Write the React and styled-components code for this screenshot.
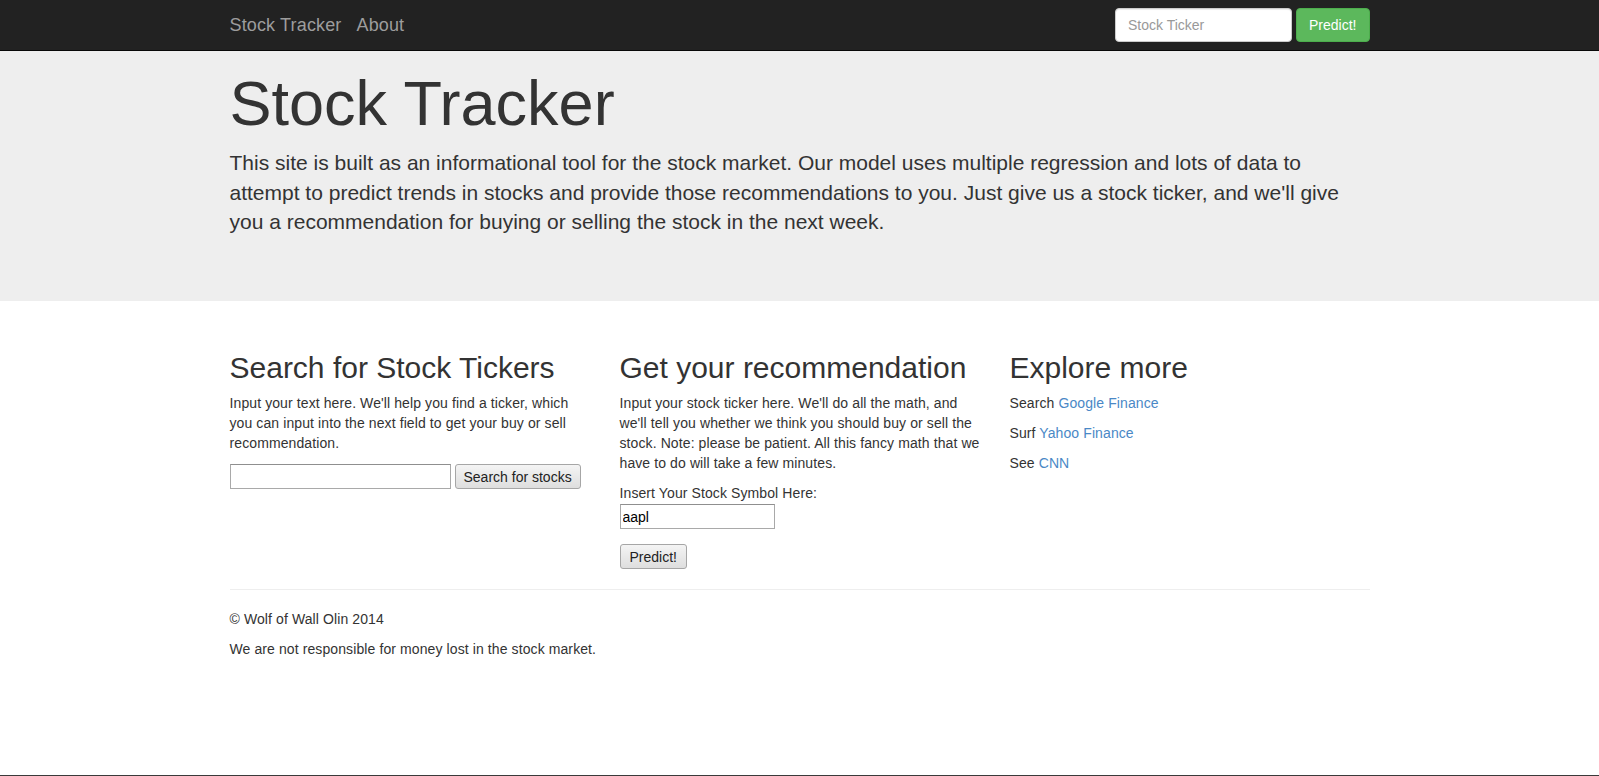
import React from 'react';
import styled, { createGlobalStyle } from 'styled-components';

const GlobalStyle = createGlobalStyle`
	* {
		box-sizing: border-box;
	}
	body {
		margin: 0;
		font-family: "Liberation Sans", Arial, sans-serif;
		font-size: 14px;
		line-height: 1.428571;
		letter-spacing: 0.1px;
		color: #333;
		background: #fff;
	}
`;

const Page = styled.div`
	min-height: 100vh;
	display: flex;
	flex-direction: column;
`;

const Container = styled.div`
	width: 1170px;
	margin: 0 auto;
	padding: 0 15px;
`;

const Navbar = styled.nav`
	background: #222;
	border-bottom: 1px solid #080808;
`;

const NavInner = styled(Container)`
	height: 50px;
	display: flex;
	align-items: center;
	justify-content: space-between;
`;

const NavLinks = styled.div`
	display: flex;
	gap: 15px;
`;

const NavLink = styled.a`
	font-size: 18px;
	line-height: 20px;
	letter-spacing: 0.15px;
	color: #9d9d9d;
	text-decoration: none;
`;

const NavForm = styled.form`
	display: flex;
	gap: 4px;
`;

const NavInput = styled.input`
	width: 177px;
	height: 34px;
	padding: 6px 12px;
	font: 14px "Liberation Sans", Arial, sans-serif;
	color: #555;
	background: #fff;
	border: 1px solid #ccc;
	border-radius: 4px;
	box-shadow: inset 0 1px 1px rgba(0, 0, 0, 0.075);
	&::placeholder {
		color: #999;
	}
`;

const SuccessButton = styled.button`
	height: 34px;
	padding: 6px 12px;
	font: 14px "Liberation Sans", Arial, sans-serif;
	color: #fff;
	background: #5cb85c;
	border: 1px solid #4cae4c;
	border-radius: 4px;
`;

const Jumbotron = styled.header`
	background: #eee;
	padding: 18px 0 50px;
	margin-bottom: 30px;
`;

const Title = styled.h1`
	margin: 0 0 10px;
	font-size: 63px;
	font-weight: 500;
	line-height: 1.1;
	letter-spacing: 0;
`;

const Lead = styled.p`
	margin: 0 0 15px;
	font-size: 21px;
	line-height: 1.4;
	letter-spacing: 0;
`;

const Row = styled.div`
	display: grid;
	grid-template-columns: repeat(3, 1fr);
	column-gap: 30px;
	align-items: start;
`;

const Heading = styled.h2`
	margin: 20px 0 10px;
	font-size: 30px;
	font-weight: 500;
	line-height: 1.1;
	letter-spacing: 0;
`;

const Text = styled.p`
	margin: 0 0 10px;
`;

const Link = styled.a`
	color: #4a88c6;
	text-decoration: none;
`;

const InlineForm = styled.form`
	display: flex;
	gap: 4px;
`;

const Label = styled.label`
	display: block;
`;

const PlainInput = styled.input`
	display: block;
	width: ${p => p.$width}px;
	height: 25px;
	padding: 1px 2px;
	font: 14px "Liberation Sans", Arial, sans-serif;
	color: #000;
	background: #fff;
	border: 1px solid #a9a9a9;
	border-top-color: #8f8f8f;
`;

const PlainButton = styled.button`
	height: 25px;
	padding: 0 ${p => p.$pad || 8}px;
	margin-top: ${p => p.$top || 0}px;
	font: 14px "Liberation Sans", Arial, sans-serif;
	color: #222;
	background: linear-gradient(#f4f4f4, #dedede);
	border: 1px solid #a6a6a6;
	border-radius: 3px;
`;

const Rule = styled.hr`
	margin: 20px 0;
	border: 0;
	border-top: 1px solid #eee;
`;

const Footer = styled.footer`
	flex: 1;
`;

const BottomEdge = styled.div`
	height: 1px;
	background: #3a3a3a;
`;

export default function App() {
	return (
		<Page>
			<GlobalStyle />
			<Navbar>
				<NavInner>
					<NavLinks>
						<NavLink href="#">Stock Tracker</NavLink>
						<NavLink href="#">About</NavLink>
					</NavLinks>
					<NavForm onSubmit={e => e.preventDefault()}>
						<NavInput placeholder="Stock Ticker" />
						<SuccessButton type="submit">Predict!</SuccessButton>
					</NavForm>
				</NavInner>
			</Navbar>

			<Jumbotron>
				<Container>
					<Title>Stock Tracker</Title>
					<Lead>
						This site is built as an informational tool for the stock market. Our model uses multiple regression and lots of data to attempt to predict trends in stocks and provide those recommendations to you. Just give us a stock ticker, and we'll give you a recommendation for buying or selling the stock in the next week.
					</Lead>
				</Container>
			</Jumbotron>

			<Container>
				<Row>
					<div>
						<Heading>Search for Stock Tickers</Heading>
						<Text>Input your text here. We'll help you find a ticker, which you can input into the next field to get your buy or sell recommendation.</Text>
						<InlineForm onSubmit={e => e.preventDefault()}>
							<PlainInput $width={221} />
							<PlainButton type="submit">Search for stocks</PlainButton>
						</InlineForm>
					</div>
					<div>
						<Heading>Get your recommendation</Heading>
						<Text>Input your stock ticker here. We'll do all the math, and we'll tell you whether we think you should buy or sell the stock. Note: please be patient. All this fancy math that we have to do will take a few minutes.</Text>
						<form onSubmit={e => e.preventDefault()}>
							<Label htmlFor="symbol">Insert Your Stock Symbol Here:</Label>
							<PlainInput id="symbol" $width={155} defaultValue="aapl" />
							<PlainButton type="submit" $top={15} $pad={9}>Predict!</PlainButton>
						</form>
					</div>
					<div>
						<Heading>Explore more</Heading>
						<Text>Search <Link href="#">Google Finance</Link></Text>
						<Text>Surf <Link href="#">Yahoo Finance</Link></Text>
						<Text>See <Link href="#">CNN</Link></Text>
					</div>
				</Row>
				<Rule />
			</Container>

			<Footer>
				<Container>
					<Text>© Wolf of Wall Olin 2014</Text>
					<Text>We are not responsible for money lost in the stock market.</Text>
				</Container>
			</Footer>
			<BottomEdge />
		</Page>
	);
}
